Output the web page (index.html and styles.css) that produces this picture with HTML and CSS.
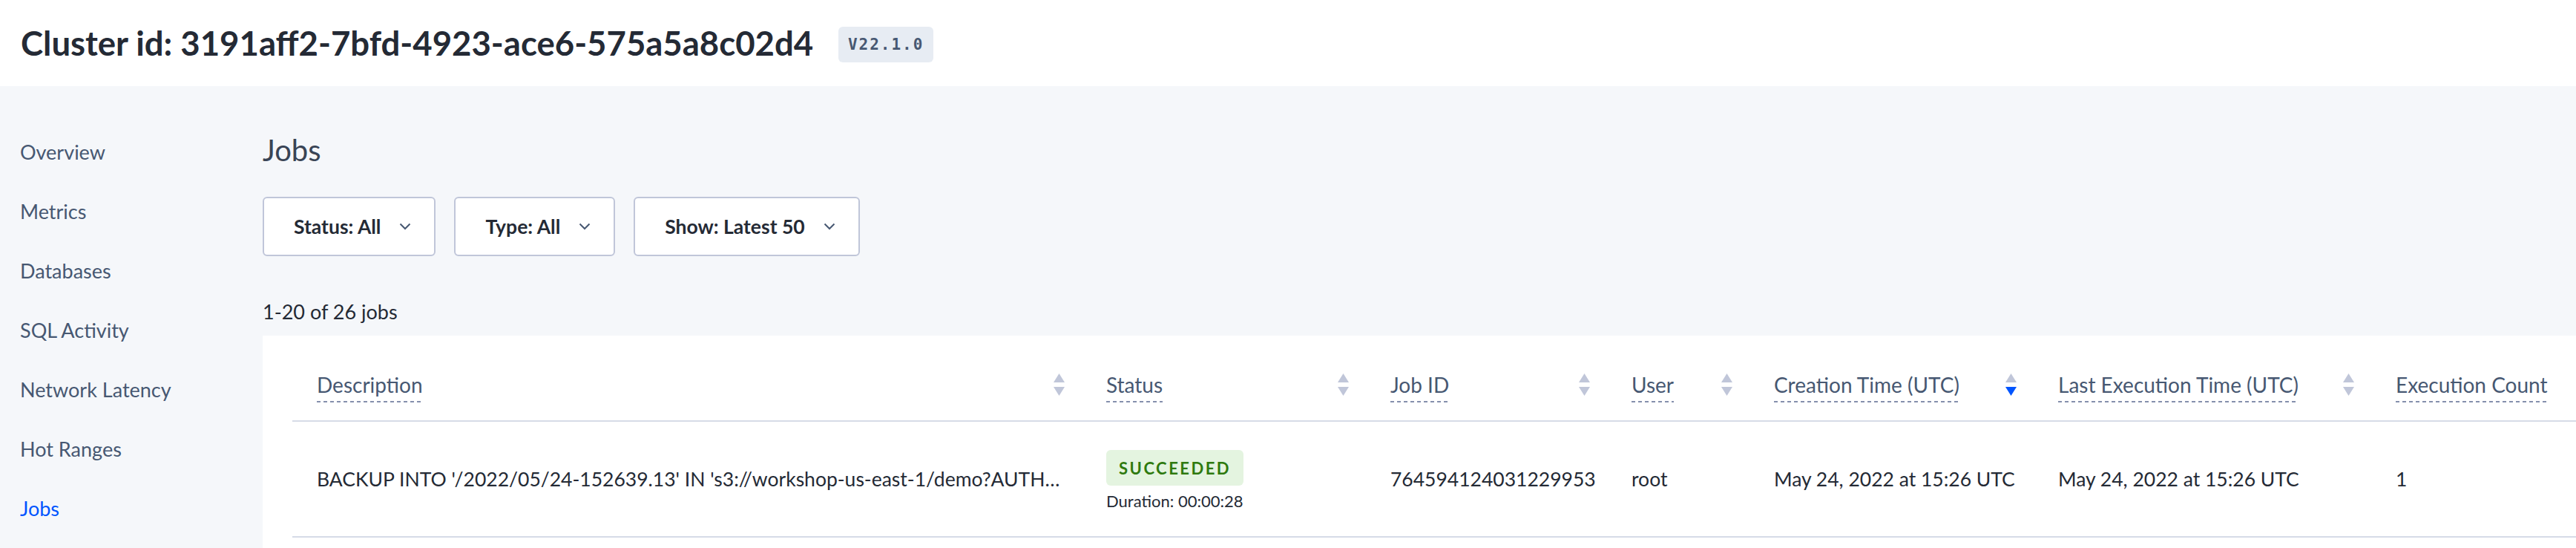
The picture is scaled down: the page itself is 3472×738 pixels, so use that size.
FILE: index.html
```html
<!DOCTYPE html>
<html lang="en">
<head>
<meta charset="utf-8">
<title>Jobs</title>
<link rel="stylesheet" href="styles.css">
</head>
<body>
<header class="page-header">
  <h1 class="cluster-title">Cluster id: 3191aff2-7bfd-4923-ace6-575a5a8c02d4</h1>
  <span class="version-badge">V22.1.0</span>
</header>
<div class="layout">
  <nav class="sidebar">
    <a class="nav-item">Overview</a>
    <a class="nav-item">Metrics</a>
    <a class="nav-item">Databases</a>
    <a class="nav-item">SQL Activity</a>
    <a class="nav-item">Network Latency</a>
    <a class="nav-item">Hot Ranges</a>
    <a class="nav-item active">Jobs</a>
  </nav>
  <main class="content">
    <h2 class="page-title">Jobs</h2>
    <div class="filters">
      <button class="filter-btn"><span>Status: All</span><svg class="chevron" viewBox="0 0 16 10"><path d="M1.5 1.5 L8 8 L14.5 1.5"/></svg></button>
      <button class="filter-btn"><span>Type: All</span><svg class="chevron" viewBox="0 0 16 10"><path d="M1.5 1.5 L8 8 L14.5 1.5"/></svg></button>
      <button class="filter-btn"><span>Show: Latest 50</span><svg class="chevron" viewBox="0 0 16 10"><path d="M1.5 1.5 L8 8 L14.5 1.5"/></svg></button>
    </div>
    <div class="result-count">1-20 of 26 jobs</div>
    <section class="card">
      <table class="jobs-table">
        <colgroup>
          <col class="c-desc"><col class="c-status"><col class="c-id"><col class="c-user"><col class="c-created"><col class="c-last"><col class="c-count">
        </colgroup>
        <thead>
          <tr>
            <th><div class="th-inner"><span class="th-title">Description</span><svg class="sort" viewBox="0 0 15 30"><path class="up" d="M7.5 0 L15 12 L0 12 Z"/><path class="down" d="M0 18 L15 18 L7.5 30 Z"/></svg></div></th>
            <th><div class="th-inner"><span class="th-title">Status</span><svg class="sort" viewBox="0 0 15 30"><path class="up" d="M7.5 0 L15 12 L0 12 Z"/><path class="down" d="M0 18 L15 18 L7.5 30 Z"/></svg></div></th>
            <th><div class="th-inner"><span class="th-title">Job ID</span><svg class="sort" viewBox="0 0 15 30"><path class="up" d="M7.5 0 L15 12 L0 12 Z"/><path class="down" d="M0 18 L15 18 L7.5 30 Z"/></svg></div></th>
            <th><div class="th-inner"><span class="th-title">User</span><svg class="sort" viewBox="0 0 15 30"><path class="up" d="M7.5 0 L15 12 L0 12 Z"/><path class="down" d="M0 18 L15 18 L7.5 30 Z"/></svg></div></th>
            <th><div class="th-inner"><span class="th-title">Creation Time (UTC)</span><svg class="sort sort-desc" viewBox="0 0 15 30"><path class="up" d="M7.5 0 L15 12 L0 12 Z"/><path class="down" d="M0 18 L15 18 L7.5 30 Z"/></svg></div></th>
            <th><div class="th-inner"><span class="th-title">Last Execution Time (UTC)</span><svg class="sort" viewBox="0 0 15 30"><path class="up" d="M7.5 0 L15 12 L0 12 Z"/><path class="down" d="M0 18 L15 18 L7.5 30 Z"/></svg></div></th>
            <th><div class="th-inner"><span class="th-title">Execution Count</span><svg class="sort" viewBox="0 0 15 30"><path class="up" d="M7.5 0 L15 12 L0 12 Z"/><path class="down" d="M0 18 L15 18 L7.5 30 Z"/></svg></div></th>
          </tr>
        </thead>
        <tbody>
          <tr>
            <td class="desc">BACKUP INTO '/2022/05/24-152639.13' IN 's3://workshop-us-east-1/demo?AUTH…</td>
            <td><div class="status-cell"><span class="status-badge">SUCCEEDED</span><span class="duration">Duration: 00:00:28</span></div></td>
            <td>764594124031229953</td>
            <td>root</td>
            <td>May 24, 2022 at 15:26 UTC</td>
            <td>May 24, 2022 at 15:26 UTC</td>
            <td>1</td>
          </tr>
        </tbody>
      </table>
    </section>
  </main>
</div>
</body>
</html>
```

FILE: styles.css
```css
* { box-sizing: border-box; }

html, body {
  margin: 0;
  padding: 0;
  height: 100%;
}

body {
  background: #f5f7fa;
  font-family: Lato, "Noto Sans", sans-serif;
  color: #242a35;
  overflow: hidden;
}

.page-header {
  height: 116px;
  background: #ffffff;
  display: flex;
  align-items: center;
  padding: 0 28px;
  gap: 34px;
}

.cluster-title {
  margin: 0;
  font-size: 45.5px;
  font-weight: 700;
  color: #242a35;
  line-height: 1;
}

.version-badge {
  display: inline-flex;
  align-items: center;
  justify-content: center;
  width: 128px;
  height: 48px;
  border-radius: 6px;
  background: #e7ecf3;
  color: #475872;
  font-family: "DejaVu Sans Mono", monospace;
  font-weight: 700;
  font-size: 21px;
  letter-spacing: 2px;
  margin-top: 4px;
}

.layout {
  display: flex;
}

.sidebar {
  width: 354px;
  flex: 0 0 354px;
  display: flex;
  flex-direction: column;
  padding: 49px 0 0 27px;
}

.nav-item {
  display: block;
  height: 80px;
  line-height: 80px;
  font-size: 27px;
  color: #475872;
  text-decoration: none;
}

.nav-item.active {
  color: #0055ff;
}

.content {
  flex: 1;
  min-width: 0;
  display: flex;
  flex-direction: column;
}

.page-title {
  margin: 56px 0 0;
  height: 60px;
  line-height: 60px;
  font-size: 40px;
  font-weight: 400;
  color: #394455;
}

.filters {
  display: flex;
  gap: 25px;
  margin-top: 33px;
}

.filter-btn {
  height: 80px;
  display: flex;
  align-items: center;
  gap: 25px;
  padding: 0 31px 0 40px;
  background: #ffffff;
  border: 2px solid #c0c6d9;
  border-radius: 6px;
  font-family: inherit;
  font-size: 26.5px;
  font-weight: 700;
  color: #242a35;
}

.chevron {
  width: 16px;
  height: 10px;
  fill: none;
  stroke: #475872;
  stroke-width: 2;
}

.result-count {
  margin-top: 55px;
  height: 40px;
  line-height: 40px;
  font-size: 27px;
  color: #242a35;
}

.card {
  margin-top: 12px;
  background: #ffffff;
  padding-left: 40px;
  overflow: hidden;
  height: 300px;
}

.jobs-table {
  border-collapse: collapse;
  table-layout: fixed;
  width: 3202px;
}

.c-desc { width: 1064px; }
.c-status { width: 383px; }
.c-id { width: 325px; }
.c-user { width: 192px; }
.c-created { width: 383px; }
.c-last { width: 455px; }
.c-count { width: 400px; }

.jobs-table th {
  padding: 46px 23px 24px 33px;
  border-bottom: 2px solid #d6dbe7;
  text-align: left;
  font-weight: 400;
}

.th-inner {
  display: flex;
  align-items: center;
  justify-content: space-between;
}

.th-title {
  font-size: 28px;
  line-height: 40px;
  color: #475872;
  padding-bottom: 4px;
  background-image: repeating-linear-gradient(to right, #8590ad 0 5px, transparent 5px 9px);
  background-repeat: no-repeat;
  background-size: 100% 2px;
  background-position: left bottom;
  white-space: nowrap;
}

.sort {
  width: 15px;
  height: 30px;
  flex: 0 0 15px;
  margin-top: -4px;
}

.sort path { fill: #c0c6d9; }
.sort-desc .down { fill: #0055ff; }

.jobs-table td {
  height: 156px;
  padding: 0 32px 0 33px;
  border-bottom: 2px solid #d6dbe7;
  font-size: 26.5px;
  color: #242a35;
  vertical-align: middle;
  white-space: nowrap;
}

.jobs-table td.desc {
  padding-right: 12px;
  overflow: hidden;
}

.status-cell {
  display: flex;
  flex-direction: column;
  align-items: flex-start;
  gap: 6px;
  padding-top: 6px;
}

.status-badge {
  display: inline-flex;
  align-items: center;
  height: 48px;
  padding: 0 17px;
  border-radius: 6px;
  background: #e4f4e0;
  color: #2f7a0f;
  font-size: 22px;
  font-weight: 700;
  letter-spacing: 2.5px;
}

.duration {
  font-size: 22px;
  color: #242a35;
  line-height: 30px;
}
```
